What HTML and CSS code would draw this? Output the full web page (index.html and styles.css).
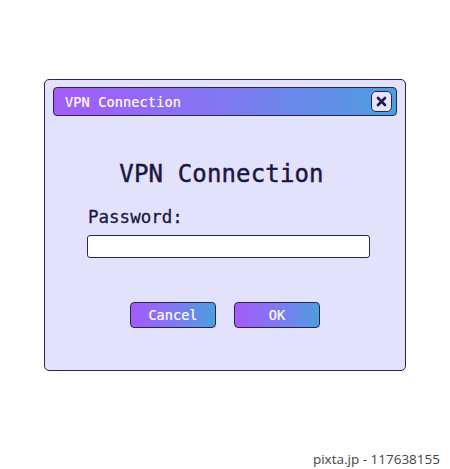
FILE: index.html
```html
<!DOCTYPE html>
<html>
<head>
<meta charset="utf-8">
<link rel="stylesheet" href="styles.css">
</head>
<body>
<div class="page">
  <div class="window">
    <div class="titlebar">
      <span class="title">VPN Connection</span>
      <span class="close"><svg width="11" height="11" viewBox="0 0 11 11"><path d="M2 2 L9 9 M9 2 L2 9" stroke="#1e1a47" stroke-width="2.6" stroke-linecap="round"/></svg></span>
    </div>
    <h1 class="heading">VPN Connection</h1>
    <div class="field">
      <label class="label">Password:</label>
      <div class="input"></div>
    </div>
    <div class="buttons">
      <button class="btn">Cancel</button>
      <button class="btn">OK</button>
    </div>
  </div>
  <div class="credit">pixta.jp - 117638155</div>
</div>
</body>
</html>
```
FILE: styles.css
```css
* { box-sizing: border-box; }
html, body { margin: 0; padding: 0; background: #ffffff; }
.page {
  position: relative;
  width: 450px;
  height: 469px;
  padding: 79px 0 0 44px;
  font-family: "DejaVu Sans Mono", "Liberation Mono", monospace;
}
.window {
  width: 362px;
  height: 292px;
  background: #e3e2fc;
  border: 1.6px solid #2a2452;
  border-radius: 5px;
  padding: 7px 8px 0 8px;
}
.titlebar {
  height: 29px;
  border: 1.6px solid #2a2452;
  border-radius: 4px;
  background: linear-gradient(90deg, #a35cf9 0%, #8575f3 45%, #4c9fdf 100%);
  display: flex;
  align-items: center;
  justify-content: space-between;
  padding: 0 4px 0 11px;
}
.title {
  color: #ffffff;
  font-size: 13.6px;
  letter-spacing: 0.1px;
  -webkit-text-stroke: 0.2px #ffffff;
}
.close {
  width: 21px;
  height: 21px;
  background: #e6e4fb;
  border: 1.6px solid #2a2452;
  border-radius: 5px;
  display: flex;
  align-items: center;
  justify-content: center;
}
.close svg { display: block; }
.heading {
  margin: 0;
  padding-top: 44px;
  text-align: center;
  font-weight: normal;
  font-size: 24px;
  letter-spacing: 0.15px;
  line-height: 28px;
  color: #1b1744;
  -webkit-text-stroke: 0.45px #1b1744;
  padding-right: 7px;
}
.field {
  margin-top: 19px;
  padding-left: 34px;
}
.label {
  display: block;
  font-size: 17.5px;
  line-height: 20px;
  color: #1b1744;
  -webkit-text-stroke: 0.3px #1b1744;
  padding-left: 1px;
}
.input {
  margin-top: 8px;
  width: 283px;
  height: 23px;
  background: #ffffff;
  border: 1.6px solid #2a2452;
  border-radius: 3px;
}
.buttons {
  margin-top: 44px;
  display: flex;
  justify-content: center;
  gap: 18px;
}
.btn {
  width: 86px;
  height: 26px;
  border: 1.6px solid #2a2452;
  border-radius: 4px;
  background: linear-gradient(90deg, #a35cf9 0%, #8575f3 45%, #4c9fdf 100%);
  color: #ffffff;
  font-family: "DejaVu Sans Mono", "Liberation Mono", monospace;
  font-size: 13.6px;
  -webkit-text-stroke: 0.2px #ffffff;
  padding: 0;
  cursor: pointer;
}
.credit {
  position: absolute;
  right: 10px;
  bottom: 1px;
  font-family: "Open Sans", "DejaVu Sans", sans-serif;
  font-size: 13.5px;
  color: #444444;
}
```
